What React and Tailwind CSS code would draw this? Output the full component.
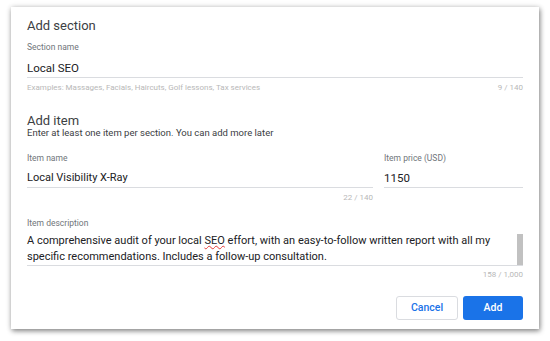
export default function App() {
  const font = { fontFamily: "Roboto, 'Liberation Sans', sans-serif" };
  return (
    <div className="w-[550px] h-[341px] bg-white pt-[7px] pl-[11px]" style={font}>
      <div className="w-[528px] h-[322px] bg-white px-4 shadow-[1px_2px_5px_rgba(0,0,0,0.45),0_0_6px_rgba(0,0,0,0.12)] flex flex-col">
        <div className="pt-[11px] text-[13px] leading-[16px] text-[#3c4043]">Add section</div>
        <div className="mt-[8px] text-[8.5px] leading-[11px] text-[#70757a]">Section name</div>
        <div className="mt-[7px] text-[11.5px] leading-[16px] text-[#202124] border-b border-[#dadce0] pb-[1px]">Local SEO</div>
        <div className="mt-[5px] flex justify-between text-[8px] leading-[10px] text-[#b8b8b8]">
          <span>Examples: Massages, Facials, Haircuts, Golf lessons, Tax services</span>
          <span>9 / 140</span>
        </div>
        <div className="mt-[21px] text-[13px] leading-[13px] text-[#3c4043]">Add item</div>
        <div className="text-[9.5px] leading-[11px] text-[#3c4043]">Enter at least one item per section. You can add more later</div>
        <div className="mt-[15px] flex gap-[11px]">
          <div className="w-[346px]">
            <div className="text-[8.5px] leading-[11px] text-[#70757a]">Item name</div>
            <div className="mt-[6px] text-[11px] leading-[16px] text-[#202124] border-b border-[#dadce0] pb-[1px]">Local Visibility X-Ray</div>
            <div className="mt-[5px] text-right text-[8px] leading-[10px] text-[#b8b8b8]">22 / 140</div>
          </div>
          <div className="flex-1">
            <div className="text-[8.5px] leading-[11px] text-[#70757a]">Item price (USD)</div>
            <div className="mt-[6px] text-[11.5px] leading-[16px] text-[#202124] border-b border-[#dadce0] pb-[1px]">1150</div>
          </div>
        </div>
        <div className="mt-[15px] text-[8.5px] leading-[11px] text-[#70757a]">Item description</div>
        <div className="mt-[4px] flex border-b border-[#dadce0]">
          <div className="flex-1 pr-[20px] text-[11px] leading-[16px] text-[#202124]">
            A comprehensive audit of your local{" "}
            <span className="underline decoration-wavy decoration-[#e53935] decoration-[0.5px] underline-offset-1">SEO</span>{" "}
            effort, with an easy-to-follow written report with all my specific recommendations. Includes a follow-up consultation.
          </div>
          <div className="w-[6px] mt-[1px] bg-[#c1c1c1]"></div>
        </div>
        <div className="mt-[4px] text-right text-[8px] leading-[10px] text-[#b8b8b8]">158 / 1,000</div>
        <div className="mt-[16px] flex justify-end gap-[5px]">
          <button className="w-[62px] h-[24px] rounded-[3px] border border-[#dadce0] bg-white text-[#1a73e8] text-[10.5px] font-medium">Cancel</button>
          <button className="w-[60px] h-[24px] rounded-[3px] bg-[#1a73e8] text-white text-[10.5px] font-medium">Add</button>
        </div>
      </div>
    </div>
  );
}
